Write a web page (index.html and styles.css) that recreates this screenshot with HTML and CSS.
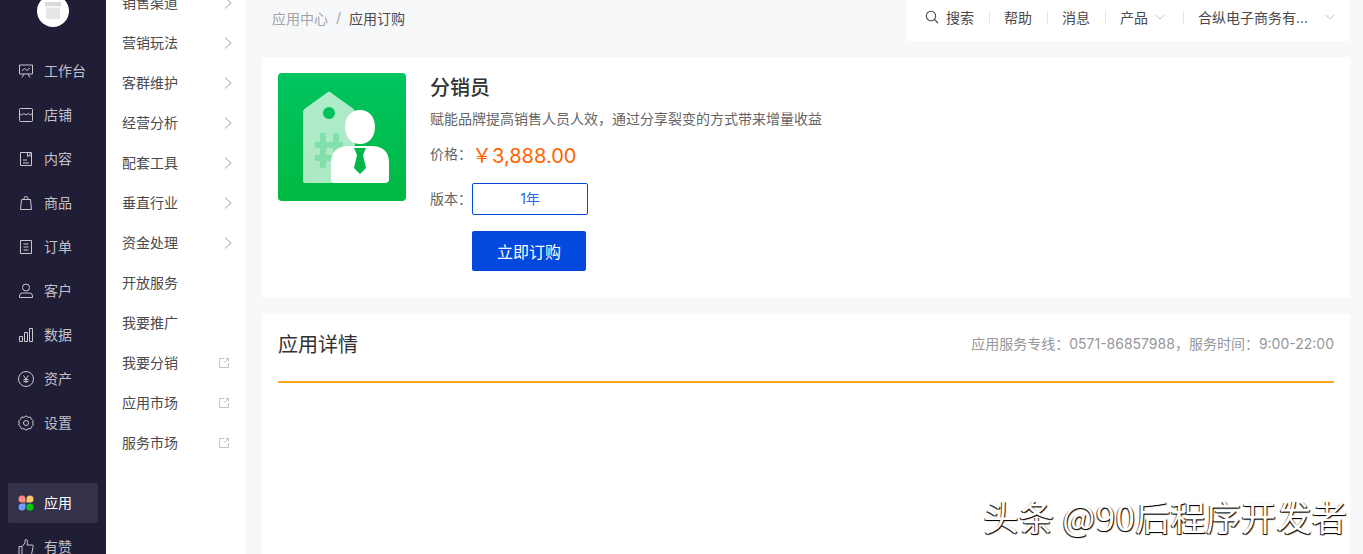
FILE: index.html
```html
<!DOCTYPE html>
<html lang="zh-CN">
<head>
    <meta charset="UTF-8">
    <title>应用订购</title>
    <link rel="stylesheet" href="styles.css">
</head>
<body>
    <div class="layout">
        <!-- 一级导航 -->
        <aside class="sidebar">
            <div class="shop-logo">
                <svg width="20" height="20" viewBox="0 0 20 20"><path d="M2 1h16v5H2z" fill="#d9d9dc"/><path d="M3 7h14v11H3z" fill="#e6e6e8"/><path d="M2 5h16v2H2z" fill="#f4f4f5"/></svg>
            </div>
            <a class="nav-item">
                <svg class="nav-icon" viewBox="0 0 16 16"><path d="M1.500 2h13v9h-13zM4 14.500l2-3.500M12 14.500l-2-3.500M4 8l2.500-2.500 2.500 2 3-2.500"/></svg>
                工作台
            </a>
            <a class="nav-item">
                <svg class="nav-icon" viewBox="0 0 16 16"><path d="M1.500 2.500a1 1 0 0 1 1-1h11a1 1 0 0 1 1 1v11a1 1 0 0 1-1 1h-11a1 1 0 0 1-1-1zM1.500 6.500q2.200 3 4.300 0q2.200 3 4.400 0q2.200 3 4.300 0"/></svg>
                店铺
            </a>
            <a class="nav-item">
                <svg class="nav-icon" viewBox="0 0 16 16"><path d="M2.500 1.500h11v13h-11zM9.500 1.500v4l1.500-1 1 1v-4M5 9h4M5 12h6"/></svg>
                内容
            </a>
            <a class="nav-item">
                <svg class="nav-icon" viewBox="0 0 16 16"><path d="M3.500 4.500h9l1 10h-11zM6 4.500v-1a2 2 0 0 1 4 0v1"/></svg>
                商品
            </a>
            <a class="nav-item">
                <svg class="nav-icon" viewBox="0 0 16 16"><path d="M2.500 1.500h11v13h-11zM5.500 5h5M5.500 8h5M5.500 11h5"/></svg>
                订单
            </a>
            <a class="nav-item">
                <svg class="nav-icon" viewBox="0 0 16 16"><circle cx="8" cy="4.500" r="3.500"/><path d="M1.500 14.500v-1.500q0-3 3-3h7q3 0 3 3v1.500z"/></svg>
                客户
            </a>
            <a class="nav-item">
                <svg class="nav-icon" viewBox="0 0 16 16"><path d="M1.500 9.500h3v5h-3zM6.500 5.500h3v9h-3zM11.500 1.500h3v13h-3z"/></svg>
                数据
            </a>
            <a class="nav-item">
                <svg class="nav-icon" viewBox="0 0 16 16"><circle cx="8" cy="8" r="7.500"/><path d="M5.500 4.500l2.500 3.500 2.500-3.500M8 8v4M5.500 8.500h5M5.500 10.500h5"/></svg>
                资产
            </a>
            <a class="nav-item">
                <svg class="nav-icon" viewBox="0 0 16 16"><path d="M8 .8l2 1.500 2.500-.2 1 2.300 1.900 1.600-.7 2 .7 2-1.900 1.600-1 2.300-2.500-.2-2 1.500-2-1.500-2.500.2-1-2.300L.6 10l.7-2-.7-2 1.900-1.600 1-2.300 2.500.2z"/><circle cx="8" cy="8" r="2.500"/></svg>
                设置
            </a>
            <a class="nav-item nav-item-active">
                <svg class="nav-icon-app" viewBox="0 0 16 16">
                    <path d="M7.500 7.500H4a3.500 3.500 0 1 1 3.500-3.500z" fill="#ff8a7a"/>
                    <path d="M8.500 7.500H12a3.500 3.500 0 1 0-3.500-3.500z" fill="#ffc56b"/>
                    <path d="M7.500 8.500H4a3.500 3.500 0 1 0 3.500 3.500z" fill="#6f9cff"/>
                    <circle cx="12" cy="12" r="3.600" fill="#0bc90b"/>
                </svg>
                应用
            </a>
            <a class="nav-item">
                <svg class="nav-icon" viewBox="0 0 16 16"><path d="M1 7.500h3v8H1zM4 7.500l3-3.500V1.500q0-1 1-1 2 .5 1.500 3L9 6h5q1.500 0 1.200 1.500l-1.500 7q-.2 1-1.200 1H4"/></svg>
                有赞
            </a>
        </aside>

        <!-- 二级导航 -->
        <nav class="subnav">
            <a class="sub-item">销售渠道<svg class="chevron" viewBox="0 0 8 12"><path d="M1 .5l6 5.500-6 5.500"/></svg></a>
            <a class="sub-item">营销玩法<svg class="chevron" viewBox="0 0 8 12"><path d="M1 .5l6 5.500-6 5.500"/></svg></a>
            <a class="sub-item">客群维护<svg class="chevron" viewBox="0 0 8 12"><path d="M1 .5l6 5.500-6 5.500"/></svg></a>
            <a class="sub-item">经营分析<svg class="chevron" viewBox="0 0 8 12"><path d="M1 .5l6 5.500-6 5.500"/></svg></a>
            <a class="sub-item">配套工具<svg class="chevron" viewBox="0 0 8 12"><path d="M1 .5l6 5.500-6 5.500"/></svg></a>
            <a class="sub-item">垂直行业<svg class="chevron" viewBox="0 0 8 12"><path d="M1 .5l6 5.500-6 5.500"/></svg></a>
            <a class="sub-item">资金处理<svg class="chevron" viewBox="0 0 8 12"><path d="M1 .5l6 5.500-6 5.500"/></svg></a>
            <a class="sub-item">开放服务</a>
            <a class="sub-item">我要推广</a>
            <a class="sub-item">我要分销<svg class="ext-icon" viewBox="0 0 10 10"><path d="M5 .5H.5v9h9V5M5 5L9.500.5M6.500.5h3v3"/></svg></a>
            <a class="sub-item">应用市场<svg class="ext-icon" viewBox="0 0 10 10"><path d="M5 .5H.5v9h9V5M5 5L9.500.5M6.500.5h3v3"/></svg></a>
            <a class="sub-item">服务市场<svg class="ext-icon" viewBox="0 0 10 10"><path d="M5 .5H.5v9h9V5M5 5L9.500.5M6.500.5h3v3"/></svg></a>
        </nav>

        <main class="main">
            <header class="topbar">
                <div class="breadcrumb">
                    <span class="crumb-link">应用中心</span>
                    <span class="crumb-sep">/</span>
                    <span>应用订购</span>
                </div>
                <div class="tools">
                    <span class="tool tool-search">
                        <svg class="search-icon" viewBox="0 0 14 14"><circle cx="6" cy="6" r="4.700"/><path d="M9.500 9.500l3.500 3.500"/></svg>
                        搜索
                    </span>
                    <span class="tool">帮助</span>
                    <span class="tool">消息</span>
                    <span class="tool tool-product">产品<svg class="caret" viewBox="0 0 10 6"><path d="M1 1l4 4 4-4"/></svg></span>
                    <span class="tool tool-shop"><span class="shop-name">合纵电子商务有...</span><svg class="caret" viewBox="0 0 10 6"><path d="M1 1l4 4 4-4"/></svg></span>
                </div>
            </header>

            <section class="card product">
                <svg class="product-logo" viewBox="0 0 128 128">
                    <defs>
                        <linearGradient id="logoBg" x1="0" y1="0" x2="0" y2="1">
                            <stop offset="0" stop-color="#00c45f"/>
                            <stop offset="1" stop-color="#00b942"/>
                        </linearGradient>
                    </defs>
                    <rect width="128" height="128" rx="4" fill="url(#logoBg)"/>
                    <path d="M25 39q0-2 2-3.500L50 19q1-1 2 0l23 16.500q2 1.500 2 3.500v71H27q-2 0-2-2z" fill="#fff" fill-opacity=".68"/>
                    <circle cx="51" cy="40" r="6" fill="#00c25a"/>
                    <path d="M42 60h6v9h7v-9h6v9h4v6h-4v7h4v6h-4v7h-6v-7h-7v7h-6v-7h-5v-6h5v-7h-5v-6h5zM48 75v7h7v-7z" fill="#00c25a" fill-opacity=".25"/>
                    <path d="M53 90q0-17 18-17h22q18 0 18 17v16q0 4-4 4H57q-4 0-4-4z" fill="#fff"/>
                    <path d="M67 54c0-10 6-17 15-17s15 7 15 17-6 17-15 17-15-7-15-17z" fill="#fff"/>
                    <path d="M76 75h12l-3 7 3 13-6 6-6-6 3-13z" fill="#00b74a"/>
                </svg>
                <div class="product-info">
                    <h2 class="product-name">分销员</h2>
                    <p class="product-desc">赋能品牌提高销售人员人效，通过分享裂变的方式带来增量收益</p>
                    <div class="price-row">
                        <span class="field-label">价格：</span>
                        <span class="price">￥3,888.00</span>
                    </div>
                    <div class="version-row">
                        <span class="field-label">版本：</span>
                        <span class="version">1年</span>
                    </div>
                    <button class="buy-btn">立即订购</button>
                </div>
            </section>

            <section class="card detail">
                <div class="detail-head">
                    <h3 class="detail-title">应用详情</h3>
                    <span class="detail-hotline">应用服务专线：0571-86857988，服务时间：9:00-22:00</span>
                </div>
            </section>
        </main>
    </div>
    <div class="watermark">头条 @90后程序开发者</div>
</body>
</html>
```

FILE: styles.css
```css
html, body {
    margin: 0;
    height: 100%;
    overflow: hidden;
}
body {
    font-family: "Inter", "Noto Sans CJK SC", sans-serif;
    background: #f7f8fa;
    color: #323233;
    font-size: 14px;
}
.layout {
    display: flex;
    height: 554px;
}

/* 一级导航 */
.sidebar {
    width: 106px;
    flex: none;
    background: #201d36;
    color: #c2c1ca;
}
.shop-logo {
    width: 32px;
    height: 32px;
    margin: -5px auto 24px;
    border-radius: 50%;
    background: #fff;
    display: flex;
    align-items: center;
    justify-content: center;
}
.nav-item {
    display: flex;
    align-items: center;
    gap: 10px;
    height: 40px;
    margin: 0 8px 4px;
    padding-left: 10px;
    border-radius: 2px;
    line-height: 1;
}
.nav-icon, .nav-icon-app {
    width: 16px;
    height: 16px;
    flex: none;
}
.nav-icon {
    fill: none;
    stroke: #c8c8cd;
    stroke-width: 1;
}
.nav-item-active {
    margin-top: 40px;
    background: #34314b;
    color: #fff;
}

/* 二级导航 */
.subnav {
    width: 140px;
    flex: none;
    background: #fff;
    color: #4a4a4d;
    margin-top: -17px;
    height: 571px;
}
.sub-item {
    display: flex;
    align-items: center;
    justify-content: space-between;
    height: 40px;
    box-sizing: border-box;
    padding: 0 14px 2px 16px;
}
.chevron {
    width: 8px;
    height: 12px;
    margin-top: 2px;
    fill: none;
    stroke: #a3a3a6;
    stroke-width: 1;
}
.ext-icon {
    width: 10px;
    height: 10px;
    margin: 2px 3px 0 0;
    fill: none;
    stroke: #c4c4c6;
    stroke-width: 1;
}

/* 主内容 */
.main {
    flex: 1;
    padding: 0 13px 0 16px;
    min-width: 0;
}
.topbar {
    display: flex;
    justify-content: space-between;
    height: 41px;
    margin-bottom: 16px;
}
.breadcrumb {
    display: flex;
    align-items: center;
    gap: 8px;
    padding: 0 0 6px 10px;
    color: #4a4a4d;
}
.crumb-link, .crumb-sep {
    color: #a3a3a6;
}
.tools {
    display: flex;
    align-items: center;
    width: 444px;
    background: #fff;
    color: #4a4a4d;
    padding-bottom: 7px;
    box-sizing: border-box;
    height: 41px;
}
.tool {
    display: flex;
    align-items: center;
    height: 12px;
    padding: 0 15px 0 14px;
    border-left: 1px solid #e6e6e8;
    white-space: nowrap;
}
.tool-search {
    border-left: 0;
    padding-left: 19px;
    gap: 7px;
}
.search-icon {
    width: 14px;
    height: 14px;
    fill: none;
    stroke: #4a4a4d;
    stroke-width: 1.100;
}
.tool-product {
    gap: 7px;
    padding-right: 18px;
}
.tool-shop {
    flex: 1;
    justify-content: space-between;
}
.caret {
    width: 10px;
    height: 6px;
    fill: none;
    stroke: #c4c4c6;
    stroke-width: 1;
}
.card {
    background: #fff;
    margin-bottom: 16px;
}
.product {
    display: flex;
    height: 241px;
    padding: 16px;
    box-sizing: border-box;
}
.product-logo {
    width: 128px;
    height: 128px;
    flex: none;
    margin-right: 24px;
}
.product-name {
    margin: 1px 0 0;
    font-size: 20px;
    font-weight: 500;
    line-height: 28px;
    color: #323233;
}
.product-desc {
    margin: 7px 0 0;
    line-height: 20px;
    color: #646566;
}
.price-row {
    display: flex;
    align-items: center;
    height: 28px;
    margin-top: 11px;
}
.field-label {
    width: 42px;
    padding-bottom: 2px;
    color: #646566;
}
.price {
    font-size: 20px;
    color: #ff6400;
}
.version-row {
    display: flex;
    align-items: center;
    margin-top: 15px;
}
.version {
    width: 116px;
    height: 32px;
    box-sizing: border-box;
    border: 1px solid #0349dd;
    border-radius: 2px;
    color: #2a68e2;
    line-height: 30px;
    text-align: center;
}
.buy-btn {
    display: block;
    width: 114px;
    height: 40px;
    margin: 16px 0 0 42px;
    border: 0;
    border-radius: 2px;
    background: #0349dd;
    color: #fff;
    font: inherit;
    font-size: 16px;
}
.detail {
    height: 240px;
    margin-bottom: 0;
    padding: 0 16px;
}
.detail-head {
    display: flex;
    align-items: center;
    justify-content: space-between;
    height: 60px;
    padding-bottom: 7px;
    border-bottom: 2px solid #f5a623;
}
.detail-title {
    margin: 0 0 2px;
    font-size: 20px;
    font-weight: 400;
    color: #323233;
}
.detail-hotline {
    color: #969799;
    margin-bottom: 2px;
}

/* 右下角水印 */
.watermark {
    position: absolute;
    right: 16px;
    bottom: 13px;
    font-family: "Noto Sans CJK SC", sans-serif;
    font-size: 35px;
    letter-spacing: .3px;
    line-height: 50px;
    color: #fff;
    text-shadow: 1px 1px 1px #000, -1px 1px 0 #444;
    white-space: nowrap;
}
```
